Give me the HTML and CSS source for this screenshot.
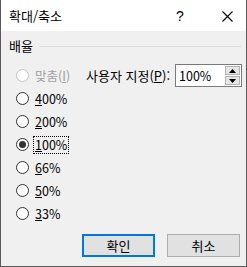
FILE: index.html
```html
<!DOCTYPE html>
<html lang="ko">
<head>
<meta charset="utf-8">
<link rel="stylesheet" href="styles.css">
</head>
<body>
<div class="window">
  <div class="titlebar">
    <span class="title">확대/축소</span>
    <span class="help">?</span>
    <span class="close">
      <svg width="11" height="11" viewBox="0 0 11 11"><path d="M0.5 0.5L10.5 10.5M10.5 0.5L0.5 10.5" stroke="#000" stroke-width="1.1" fill="none"/></svg>
    </span>
  </div>
  <div class="content">
    <div class="group-head">
      <span class="group-label">배율</span>
      <span class="group-line"></span>
    </div>
    <div class="main">
      <div class="radios">
        <div class="row disabled"><span class="radio"></span><span class="lbl">맞춤(<u>I</u>)</span></div>
        <div class="row"><span class="radio"></span><span class="lbl"><u>4</u>00%</span></div>
        <div class="row"><span class="radio"></span><span class="lbl"><u>2</u>00%</span></div>
        <div class="row"><span class="radio checked"></span><span class="lbl focus"><u>1</u>00%</span></div>
        <div class="row"><span class="radio"></span><span class="lbl"><u>6</u>6%</span></div>
        <div class="row"><span class="radio"></span><span class="lbl"><u>5</u>0%</span></div>
        <div class="row"><span class="radio"></span><span class="lbl"><u>3</u>3%</span></div>
      </div>
      <div class="custom">
        <span class="custom-label">사용자 지정(<u>P</u>):</span>
        <div class="spin">
          <span class="spin-value">100%</span>
          <span class="spin-btns">
            <span class="spin-btn"><svg width="7" height="4" viewBox="0 0 7 4"><path d="M3.5 0L7 4H0Z" fill="#000"/></svg></span>
            <span class="spin-btn"><svg width="7" height="4" viewBox="0 0 7 4"><path d="M0 0H7L3.5 4Z" fill="#000"/></svg></span>
          </span>
        </div>
      </div>
    </div>
    <div class="buttons">
      <button class="btn default">확인</button>
      <button class="btn">취소</button>
    </div>
  </div>
</div>
</body>
</html>
```
FILE: styles.css
```css
* { box-sizing: border-box; }
html, body { margin: 0; padding: 0; background: #fff; }
body {
  font-family: "Noto Sans CJK KR", "Noto Sans", sans-serif;
  font-size: 12px;
  color: #000;
}
.window {
  width: 247px;
  height: 267px;
  background: #f0f0f0;
  border-left: 1px solid #5a5a5a;
  border-right: 1px solid #5a5a5a;
  border-bottom: 1px solid #5a5a5a;
  display: flex;
  flex-direction: column;
}
.titlebar {
  height: 31px;
  background: #fff;
  display: flex;
  align-items: center;
  padding-left: 8px;
}
.title { font-size: 13px; line-height: 16px; flex: 1; }
.help { width: 12px; font-size: 14px; margin-right: 32px; font-family: "Liberation Sans", sans-serif; }
.close { width: 26px; display: flex; align-items: center; padding-left: 2px; padding-top: 1px; }
.content {
  flex: 1;
  display: flex;
  flex-direction: column;
  padding: 7px 5px 0 8px;
}
.group-head {
  display: flex;
  align-items: center;
  height: 16px;
}
.group-label { font-size: 13px; line-height: 16px; margin-right: 6px; }
.group-line { flex: 1; height: 1px; background: #dcdcdc; }
.main {
  display: flex;
  margin-top: 10px;
}
.radios { display: flex; flex-direction: column; width: 77px; flex: 0 0 77px; }
.row {
  height: 23px;
  display: flex;
  align-items: center;
  padding-left: 7px;
}
.radio {
  width: 13px;
  height: 13px;
  border: 1px solid #333;
  border-radius: 50%;
  background: #fff;
  display: flex;
  align-items: center;
  justify-content: center;
  margin-right: 6px;
  flex: 0 0 13px;
}
.radio.checked::after {
  content: "";
  width: 7px;
  height: 7px;
  border-radius: 50%;
  background: #333;
}
.row.disabled .radio { border-color: #c4c4c4; }
.row.disabled .lbl { color: #a0a0a0; }
.lbl { line-height: 16px; font-size: 12.5px; }
.lbl.focus { outline: 1px dotted #000; outline-offset: 0; padding: 0 1px; margin-left: -1px; }
u { text-decoration: underline; text-underline-offset: 1px; }
.custom {
  display: flex;
  align-items: center;
  height: 23px;
}
.custom-label { font-size: 13px; line-height: 16px; width: 89px; flex: 0 0 89px; white-space: nowrap; }
.spin {
  width: 67px;
  flex: 0 0 67px;
  height: 23px;
  border: 1px solid #7a7a7a;
  background: #fff;
  display: flex;
}
.spin-value { flex: 1; padding-left: 3px; line-height: 21px; font-size: 12.5px; }
.spin-btns {
  width: 17px;
  display: flex;
  flex-direction: column;
  padding: 1px;
  gap: 1px;
}
.spin-btn {
  flex: 1;
  background: #e5e5e5;
  border: 1px solid #b4b4b4;
  display: flex;
  align-items: center;
  justify-content: center;
}
.buttons {
  margin-top: auto;
  margin-bottom: 9px;
  display: flex;
  justify-content: flex-end;
  gap: 12px;
  padding-right: 1px;
}
.btn {
  width: 73px;
  flex: 0 0 73px;
  height: 23px;
  font-family: "Noto Sans CJK KR", sans-serif;
  font-size: 13px;
  line-height: 19px;
  background: #e1e1e1;
  border: 1px solid #adadad;
  padding: 0;
  color: #000;
}
.btn.default { border: 2px solid #0078d7; }
```
